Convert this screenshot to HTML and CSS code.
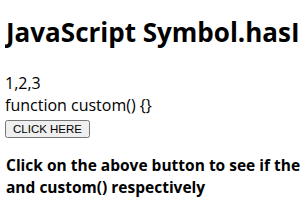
FILE: index.html
```html
<!DOCTYPE html>
<html lang="en">

<head>
    <meta charset="UTF-8">
    <title>JavaScript Symbol.hasInstance</title>
    <link rel="stylesheet" href="styles.css">
</head>

<body>
    <h1>JavaScript Symbol.hasInstance Property</h1>

    <div id="arr">1,2,3</div>
    <div id="fn">function custom() {}</div>
    <button class="btn">CLICK HERE</button>

    <h3 class="note">Click on the above button to see if the above are instances of Array<br>
        and custom() respectively</h3>

    <div id="result"></div>
</body>

</html>
```

FILE: styles.css
```css
html {
    overflow: hidden;
}

body {
    font-family: "Open Sans", "Noto Sans", sans-serif;
    font-size: 16px;
    color: #000;
    margin: 8px 5px;
    width: 700px;
}

h1 {
    font-size: 26px;
    margin: 6px 0 22px 1px;
    white-space: nowrap;
}

.btn {
    font-family: "Liberation Sans", Arial, sans-serif;
    font-size: 11.5px;
    padding: 1px 6px;
    height: 18px;
    margin-top: 2px;
}

.note {
    font-size: 15.5px;
    margin: 16px 0 16px 1px;
}
```
